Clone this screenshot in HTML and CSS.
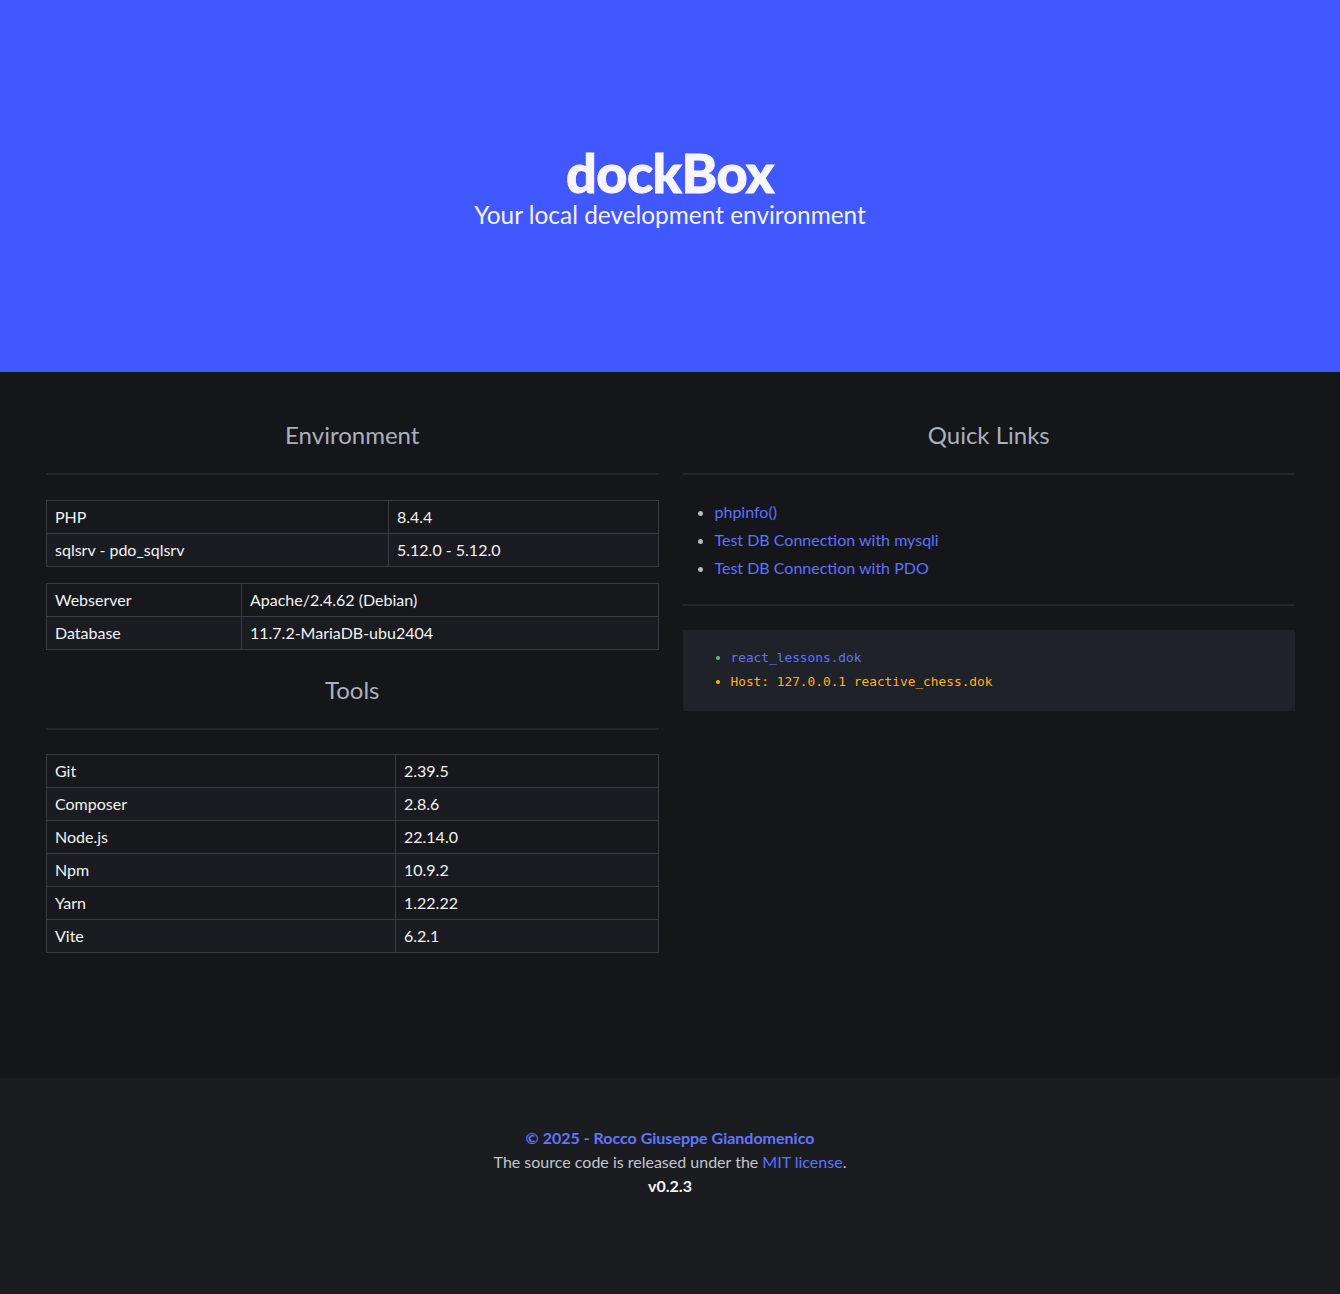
FILE: index.html
```html
<!DOCTYPE html>
<html lang="en">
<head>
<meta charset="utf-8">
<title>dockBox</title>
<link rel="stylesheet" href="styles.css">
</head>
<body>
<section class="hero">
  <div class="hero-body">
    <h1 class="hero-title">dockBox</h1>
    <p class="hero-subtitle">Your local development environment</p>
  </div>
</section>

<main class="main">
  <div class="columns">
    <div class="column">
      <h2 class="section-title">Environment</h2>
      <hr class="rule">
      <table class="table table-env1">
        <tbody>
          <tr><td>PHP</td><td>8.4.4</td></tr>
          <tr><td>sqlsrv - pdo_sqlsrv</td><td>5.12.0 - 5.12.0</td></tr>
        </tbody>
      </table>
      <table class="table table-env2">
        <tbody>
          <tr><td>Webserver</td><td>Apache/2.4.62 (Debian)</td></tr>
          <tr><td>Database</td><td>11.7.2-MariaDB-ubu2404</td></tr>
        </tbody>
      </table>
      <h2 class="section-title tools-title">Tools</h2>
      <hr class="rule rule-tight">
      <table class="table table-tools">
        <tbody>
          <tr><td>Git</td><td>2.39.5</td></tr>
          <tr><td>Composer</td><td>2.8.6</td></tr>
          <tr><td>Node.js</td><td>22.14.0</td></tr>
          <tr><td>Npm</td><td>10.9.2</td></tr>
          <tr><td>Yarn</td><td>1.22.22</td></tr>
          <tr><td>Vite</td><td>6.2.1</td></tr>
        </tbody>
      </table>
    </div>
    <div class="column">
      <h2 class="section-title">Quick Links</h2>
      <hr class="rule">
      <ul class="links">
        <li><a href="#">phpinfo()</a></li>
        <li><a href="#">Test DB Connection with mysqli</a></li>
        <li><a href="#">Test DB Connection with PDO</a></li>
      </ul>
      <hr class="rule rule-tight">
      <div class="hosts">
        <ul class="hosts-list">
          <li class="host-ok">react_lessons.dok</li>
          <li class="host-warn">Host: 127.0.0.1 reactive_chess.dok</li>
        </ul>
      </div>
    </div>
  </div>
</main>

<footer class="footer">
  <p><a class="author" href="#">© 2025 - Rocco Giuseppe Giandomenico</a></p>
  <p class="license">The source code is released under the <a href="#">MIT license</a>.</p>
  <p class="version">v0.2.3</p>
</footer>
</body>
</html>
```

FILE: styles.css
```css
* { box-sizing: border-box; }

html, body {
  margin: 0;
  padding: 0;
}

body {
  min-height: 100vh;
  display: flex;
  flex-direction: column;
  background: #14161a;
  color: #f0f1f3;
  font-family: "Lato", "Open Sans", sans-serif;
  font-size: 16px;
  line-height: 1.5;
}

a {
  color: #5f72ff;
  text-decoration: none;
}

/* HERO */
.hero {
  background: #4258ff;
  height: 372px;
  display: flex;
  align-items: center;
  justify-content: center;
}

.hero-body {
  text-align: center;
}

.hero-title {
  margin: 0;
  font-family: "Lato Black", "Lato Heavy", "Lato", sans-serif;
  font-size: 54px;
  font-weight: 900;
  line-height: 60px;
  color: #f7f6ff;
  letter-spacing: -0.5px;
  -webkit-text-stroke: 0.9px #f7f6ff;
}

.hero-subtitle {
  margin: -3px 0 0;
  font-size: 24.4px;
  line-height: 30px;
  color: #f2f2ff;
}

/* MAIN */
.main {
  flex: 1;
  padding: 49px 45px 48px 46px;
}

.columns {
  display: grid;
  grid-template-columns: 1fr 1fr;
  column-gap: 24px;
}

.section-title {
  margin: 0;
  font-size: 24px;
  font-weight: 400;
  line-height: 28px;
  text-align: center;
  color: #a9b1bc;
}

.tools-title {
  margin-top: 26px;
}

.rule {
  border: 0;
  height: 2px;
  background: #23262c;
  margin: 24px 0 25px;
}

.rule-tight {
  margin-bottom: 24px;
}

/* TABLES */
.table {
  width: 100%;
  table-layout: fixed;
  border-collapse: collapse;
  margin-bottom: 16px;
  color: #f2f3f5;
}

.table td {
  border: 1px solid #393c45;
  padding: 4px 8px;
  line-height: 24px;
  background: #16181c;
}

.table tr:nth-child(even) td {
  background: #1a1c21;
}

.table-env1 td:first-child { width: 342px; }
.table-env2 td:first-child { width: 195px; }
.table-tools td:first-child { width: 349px; }

.table-tools { margin-bottom: 24px; }

/* LINKS */
.links {
  margin: 0;
  padding-left: 32px;
  color: #b3b7bf;
}

.links li {
  line-height: 24px;
}

.links li + li {
  margin-top: 4px;
}

.links li::marker {
  color: #b3b7bf;
}

/* HOSTS */
.hosts {
  background: #1f2229;
  padding: 16px 0 17px 48px;
  font-family: "DejaVu Sans Mono", "Liberation Mono", monospace;
  font-size: 12.8px;
}

.hosts-list {
  margin: 0;
  padding: 0;
}

.hosts-list li {
  line-height: 24px;
}

.host-ok { color: #5f72ff; }
.host-ok::marker { color: #48c78e; }
.host-warn { color: #ffb30f; }
.host-warn::marker { color: #ffb30f; }

/* FOOTER */
.footer {
  background: #1a1c20;
  padding: 48px 24px 96px;
  text-align: center;
  color: #c2c6cd;
}

.footer p {
  margin: 0;
  line-height: 24px;
}

.author {
  font-weight: 700;
  color: #6375ff;
}

.version {
  font-weight: 700;
  color: #f5f5f5;
}
```
